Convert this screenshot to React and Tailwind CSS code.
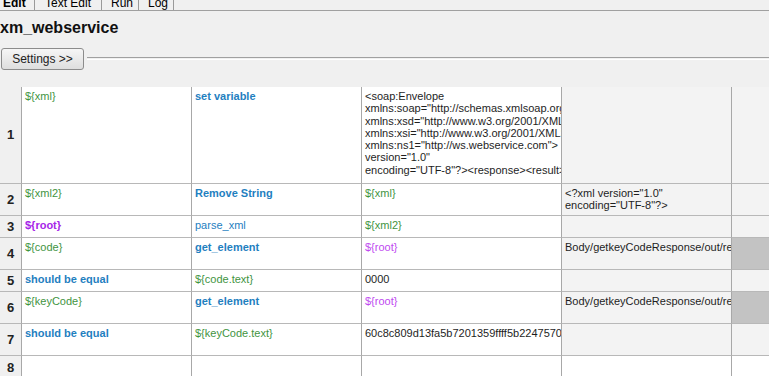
import React from 'react';

const font = { fontFamily: '"Liberation Sans", Arial, sans-serif' };

// cell styles
const GREEN = 'text-[#3f943f]';
const KW = 'text-[#1f80bf] font-bold text-[11.8px]';
const BLUE = 'text-[#1f80bf]';
const PURPLE = 'text-[#c04af0]';
const PURPLE_B = 'text-[#a626e8] font-bold text-[11.8px]';
const BLACK = 'text-[#1e1e1e]';

const rows = [
    {
        h: 'h-[97px]',
        cells: [
            { t: '${xml}', c: GREEN },
            { t: 'set variable', c: KW },
            {
                lines: [
                    '<soap:Envelope',
                    'xmlns:soap="http://schemas.xmlsoap.org/soap/envelope/"',
                    'xmlns:xsd="http://www.w3.org/2001/XMLSchema"',
                    'xmlns:xsi="http://www.w3.org/2001/XMLSchema-instance"',
                    'xmlns:ns1="http://ws.webservice.com">',
                    'version="1.0"',
                    'encoding="UTF-8"?><response><result>',
                ],
                c: BLACK,
            },
            { t: '', c: '' },
        ],
        last: '',
    },
    {
        h: 'h-[32px]',
        cells: [
            { t: '${xml2}', c: GREEN },
            { t: 'Remove String', c: KW },
            { t: '${xml}', c: GREEN },
            { lines: ['<?xml version="1.0"', 'encoding="UTF-8"?>'], c: BLACK },
        ],
        last: '',
    },
    {
        h: 'h-[22px]',
        cells: [
            { t: '${root}', c: PURPLE_B },
            { t: 'parse_xml', c: BLUE },
            { t: '${xml2}', c: GREEN },
            { t: '', c: '' },
        ],
        last: '',
    },
    {
        h: 'h-[32px]',
        cells: [
            { t: '${code}', c: GREEN },
            { t: 'get_element', c: KW },
            { t: '${root}', c: PURPLE },
            { t: 'Body/getkeyCodeResponse/out/result', c: BLACK },
        ],
        last: 'dark',
    },
    {
        h: 'h-[22px]',
        cells: [
            { t: 'should be equal', c: KW },
            { t: '${code.text}', c: GREEN },
            { t: '0000', c: BLACK },
            { t: '', c: '' },
        ],
        last: '',
    },
    {
        h: 'h-[32px]',
        cells: [
            { t: '${keyCode}', c: GREEN },
            { t: 'get_element', c: KW },
            { t: '${root}', c: PURPLE },
            { t: 'Body/getkeyCodeResponse/out/result', c: BLACK },
        ],
        last: 'dark',
    },
    {
        h: 'h-[32px]',
        cells: [
            { t: 'should be equal', c: KW },
            { t: '${keyCode.text}', c: GREEN },
            { t: '60c8c809d13fa5b7201359ffff5b22475701a2', c: BLACK },
            { t: '', c: '' },
        ],
        last: '',
    },
];

const Cell = ({ cell, bg }) => (
    <div className={`${bg} border-r border-b border-r-[#a8a8a8] border-b-[#b8b8b8] pl-[3px] pt-[3px] overflow-hidden text-[11px] leading-[12.3px] ${cell.c}`}>
        {cell.lines
            ? cell.lines.map((l, i) => (
                  <div key={i} className="whitespace-nowrap">{l}</div>
              ))
            : <div className="whitespace-nowrap">{cell.t}</div>}
    </div>
);

const App = () => {
    return (
        <div style={font} className="w-[769px] h-[376px] overflow-hidden bg-[#f0f0f0] text-black">
            {/* tabs, mostly scrolled off the top */}
            <div className="h-[11px] overflow-hidden flex items-end border-b border-[#a0a0a0]">
                <div className="flex text-[12px] leading-[16px] translate-y-[1px]">
                    <div className="w-[35px] pl-[3px] font-bold border-r border-[#9a9a9a]">Edit</div>
                    <div className="w-[67px] pl-[10px] border-r border-[#9a9a9a]">Text Edit</div>
                    <div className="w-[37px] pl-[9px] border-r border-[#9a9a9a]">Run</div>
                    <div className="w-[35px] pl-[9px] border-r border-[#9a9a9a]">Log</div>
                </div>
            </div>

            <h1 className="mt-[8px] text-[16px] leading-[18px] font-bold text-[#111]">xm_webservice</h1>

            <div className="mt-[11px] flex items-center">
                <button className="ml-[1px] w-[83px] h-[22px] rounded-[3px] border border-[#8c8c8c] bg-gradient-to-b from-[#f6f6f6] to-[#dedede] text-[12px] text-[#222] flex items-center justify-center pb-[1px]">
                    Settings &gt;&gt;
                </button>
                <div className="flex-1 ml-[3px] mt-[-1px] h-[3px] border-t border-b border-t-[#a0a0a0] border-b-white" />
            </div>

            {/* test case table */}
            <div className="mt-[17px] grid grid-cols-[22px_170px_170px_200px_170px_1fr]">
                {rows.map((r, i) => (
                    <React.Fragment key={i}>
                        <div className={`${r.h} bg-[#f0f0f0] border-r border-b border-r-[#a8a8a8] border-b-[#b8b8b8] flex items-center justify-center text-[13px] font-bold text-[#222]`}>
                            {i + 1}
                        </div>
                        <Cell cell={r.cells[0]} bg="bg-white" />
                        <Cell cell={r.cells[1]} bg="bg-white" />
                        <Cell cell={r.cells[2]} bg="bg-white" />
                        <Cell cell={r.cells[3]} bg="bg-[#f3f3f3]" />
                        <div className={`${r.last === 'dark' ? 'bg-[#c3c3c3]' : 'bg-[#f3f3f3]'} border-b border-[#b8b8b8]`} />
                    </React.Fragment>
                ))}
                <div className="h-[24px] bg-[#f0f0f0] border-r border-r-[#a8a8a8] flex items-center justify-center text-[13px] font-bold text-[#222]">
                    8
                </div>
                <div className="bg-white border-r border-r-[#a8a8a8]" />
                <div className="bg-white border-r border-r-[#a8a8a8]" />
                <div className="bg-white border-r border-r-[#a8a8a8]" />
                <div className="bg-white border-r border-r-[#a8a8a8]" />
                <div className="bg-white" />
            </div>
        </div>
    );
};

export default App;
